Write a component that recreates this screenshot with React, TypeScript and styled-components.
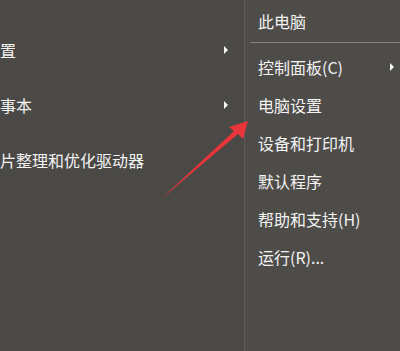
import React from "react";
import styled, { createGlobalStyle } from "styled-components";

const Global = createGlobalStyle`
  html, body { margin: 0; padding: 0; background: #4b4946; }
  body { font-family: "Noto Sans CJK SC", "Noto Sans", sans-serif; }
`;

const Screen = styled.div`
  position: relative;
  width: 400px;
  height: 351px;
  display: flex;
  overflow: hidden;
  background: #4b4946;
`;

const LeftPane = styled.div`
  width: 244px;
  flex: none;
  display: flex;
  flex-direction: column;
  padding-top: 22px;
  border-right: 1px solid #5f5d5a;
  overflow: hidden;
`;

const LeftRow = styled.div`
  height: 55px;
  display: flex;
  align-items: center;
  justify-content: space-between;
  padding-right: 16px;
  margin-left: -16px;
`;

const RightPane = styled.div`
  flex: 1;
  display: flex;
  flex-direction: column;
  background: #4e4c49;
`;

const Label = styled.span`
  color: #f3f3f3;
  font-size: 16px;
  line-height: 20px;
  white-space: nowrap;
`;

const Caret = styled.span`
  width: 0;
  height: 0;
  border-left: 4px solid #f5f5f5;
  border-top: 4px solid transparent;
  border-bottom: 4px solid transparent;
`;

const TopItem = styled.div`
  height: 42px;
  display: flex;
  align-items: center;
  padding-left: 13px;
  box-sizing: border-box;
`;

const Divider = styled.div`
  height: 1px;
  margin-left: 5px;
  background: #86847f;
`;

const MenuList = styled.div`
  display: flex;
  flex-direction: column;
  padding-top: 5px;
`;

const MenuRow = styled.div`
  height: 38px;
  display: flex;
  align-items: center;
  justify-content: space-between;
  padding-left: 13px;
  padding-right: 6px;
`;

const Pointer = styled.svg`
  position: absolute;
  left: 0;
  top: 0;
  pointer-events: none;
`;

const leftItems = [
  { text: "设置", sub: true },
  { text: "记事本", sub: true },
  { text: "碎片整理和优化驱动器", sub: false },
];

const rightItems = [
  { text: "控制面板(C)", sub: true },
  { text: "电脑设置", sub: false },
  { text: "设备和打印机", sub: false },
  { text: "默认程序", sub: false },
  { text: "帮助和支持(H)", sub: false },
  { text: "运行(R)...", sub: false },
];

export default function App() {
  return (
    <>
      <Global />
      <Screen>
        <LeftPane>
          {leftItems.map((it) => (
            <LeftRow key={it.text}>
              <Label>{it.text}</Label>
              {it.sub && <Caret />}
            </LeftRow>
          ))}
        </LeftPane>
        <RightPane>
          <TopItem>
            <Label>此电脑</Label>
          </TopItem>
          <Divider />
          <MenuList>
            {rightItems.map((it) => (
              <MenuRow key={it.text}>
                <Label>{it.text}</Label>
                {it.sub && <Caret />}
              </MenuRow>
            ))}
          </MenuList>
        </RightPane>
        <Pointer width="400" height="351" viewBox="0 0 400 351">
          <polygon
            points="248,121 229,127 234,131 160,200 238,134 243,139"
            fill="#e8353a"
          />
        </Pointer>
      </Screen>
    </>
  );
}
